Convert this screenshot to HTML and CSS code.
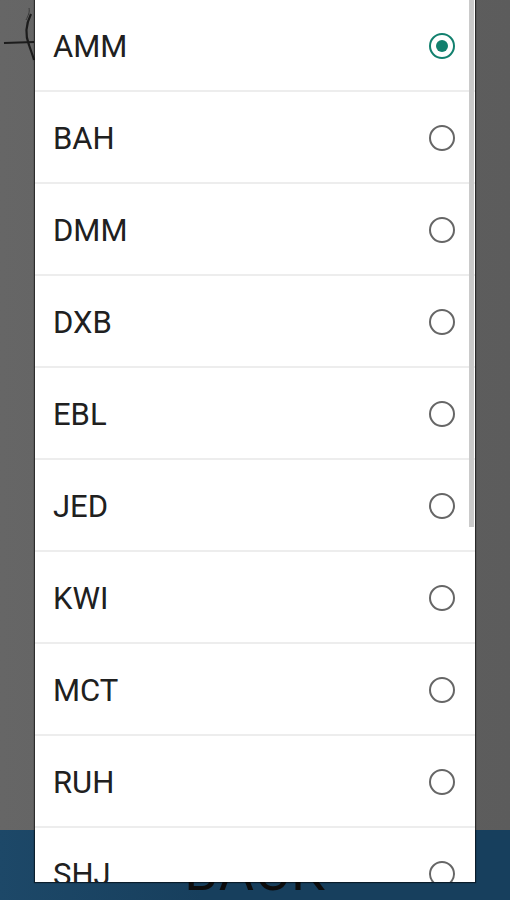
FILE: index.html
```html
<!DOCTYPE html>
<html>
<head>
<meta charset="utf-8">
<link rel="stylesheet" href="styles.css">
</head>
<body>
<div class="screen">
  <div class="backdrop">
    <svg class="logo" width="40" height="70" viewBox="0 0 40 70">
      <path d="M4 43 L34 42" stroke="#1c1c1c" stroke-width="2" fill="none"/>
      <path d="M31 14 C26 24 25 35 29 45 C31 51 33 56 34 60" stroke="#1c1c1c" stroke-width="2.2" fill="none"/>
      <path d="M29 8 C30 12 28 16 26 20" stroke="#3a3a3a" stroke-width="1" fill="none"/>
    </svg>
    <div class="spacer"></div>
    <div class="backbar"><span class="backlabel">BACK</span></div>
  </div>

  <div class="dialog">
    <ul class="options">
      <li class="option"><span class="code">AMM</span><span class="radio checked"></span></li>
      <li class="option"><span class="code">BAH</span><span class="radio"></span></li>
      <li class="option"><span class="code">DMM</span><span class="radio"></span></li>
      <li class="option"><span class="code">DXB</span><span class="radio"></span></li>
      <li class="option"><span class="code">EBL</span><span class="radio"></span></li>
      <li class="option"><span class="code">JED</span><span class="radio"></span></li>
      <li class="option"><span class="code">KWI</span><span class="radio"></span></li>
      <li class="option"><span class="code">MCT</span><span class="radio"></span></li>
      <li class="option"><span class="code">RUH</span><span class="radio"></span></li>
      <li class="option"><span class="code">SHJ</span><span class="radio"></span></li>
    </ul>
    <div class="scrollbar"></div>
  </div>
</div>
</body>
</html>
```
FILE: styles.css
```css
html, body {
  margin: 0;
  padding: 0;
}
body {
  width: 510px;
  height: 900px;
  overflow: hidden;
  font-family: Roboto, "Liberation Sans", sans-serif;
  background: #626262;
}
.screen {
  position: relative;
  width: 510px;
  height: 900px;
}
.backdrop {
  display: flex;
  flex-direction: column;
  height: 900px;
  background: linear-gradient(90deg, #666666 0%, #606060 50%, #5c5c5c 100%);
}
.logo {
  display: block;
}
.spacer {
  flex: 1;
}
.backbar {
  height: 70px;
  box-sizing: border-box;
  padding-top: 16px;
  background: linear-gradient(90deg, #1d4868 0%, #173f5d 40%, #173f5d 100%);
  text-align: center;
}
.backlabel {
  font-size: 54px;
  line-height: 52px;
  color: #0d0d0d;
  letter-spacing: 1px;
}
.dialog {
  position: absolute;
  left: 35px;
  top: 0;
  width: 440px;
  height: 882px;
  overflow: hidden;
  background: #ffffff;
  box-shadow: 0 0 1px 1px rgba(0,0,0,0.55);
}
.options {
  list-style: none;
  margin: 0;
  padding: 0;
}
.option {
  height: 92px;
  box-sizing: border-box;
  border-bottom: 2px solid #ededed;
  display: flex;
  align-items: center;
  justify-content: space-between;
  padding: 2px 20px 0 18px;
}
.code {
  font-size: 31px;
  color: #202020;
}
.radio {
  width: 26px;
  height: 26px;
  box-sizing: border-box;
  border-radius: 50%;
  border: 2.5px solid #666666;
  display: flex;
  align-items: center;
  justify-content: center;
}
.radio.checked {
  border-color: #12806e;
}
.radio.checked::after {
  content: "";
  width: 12px;
  height: 12px;
  border-radius: 50%;
  background: #12806e;
}
.scrollbar {
  position: absolute;
  right: 1px;
  top: 0;
  width: 5px;
  height: 527px;
  background: #cacaca;
}
```
